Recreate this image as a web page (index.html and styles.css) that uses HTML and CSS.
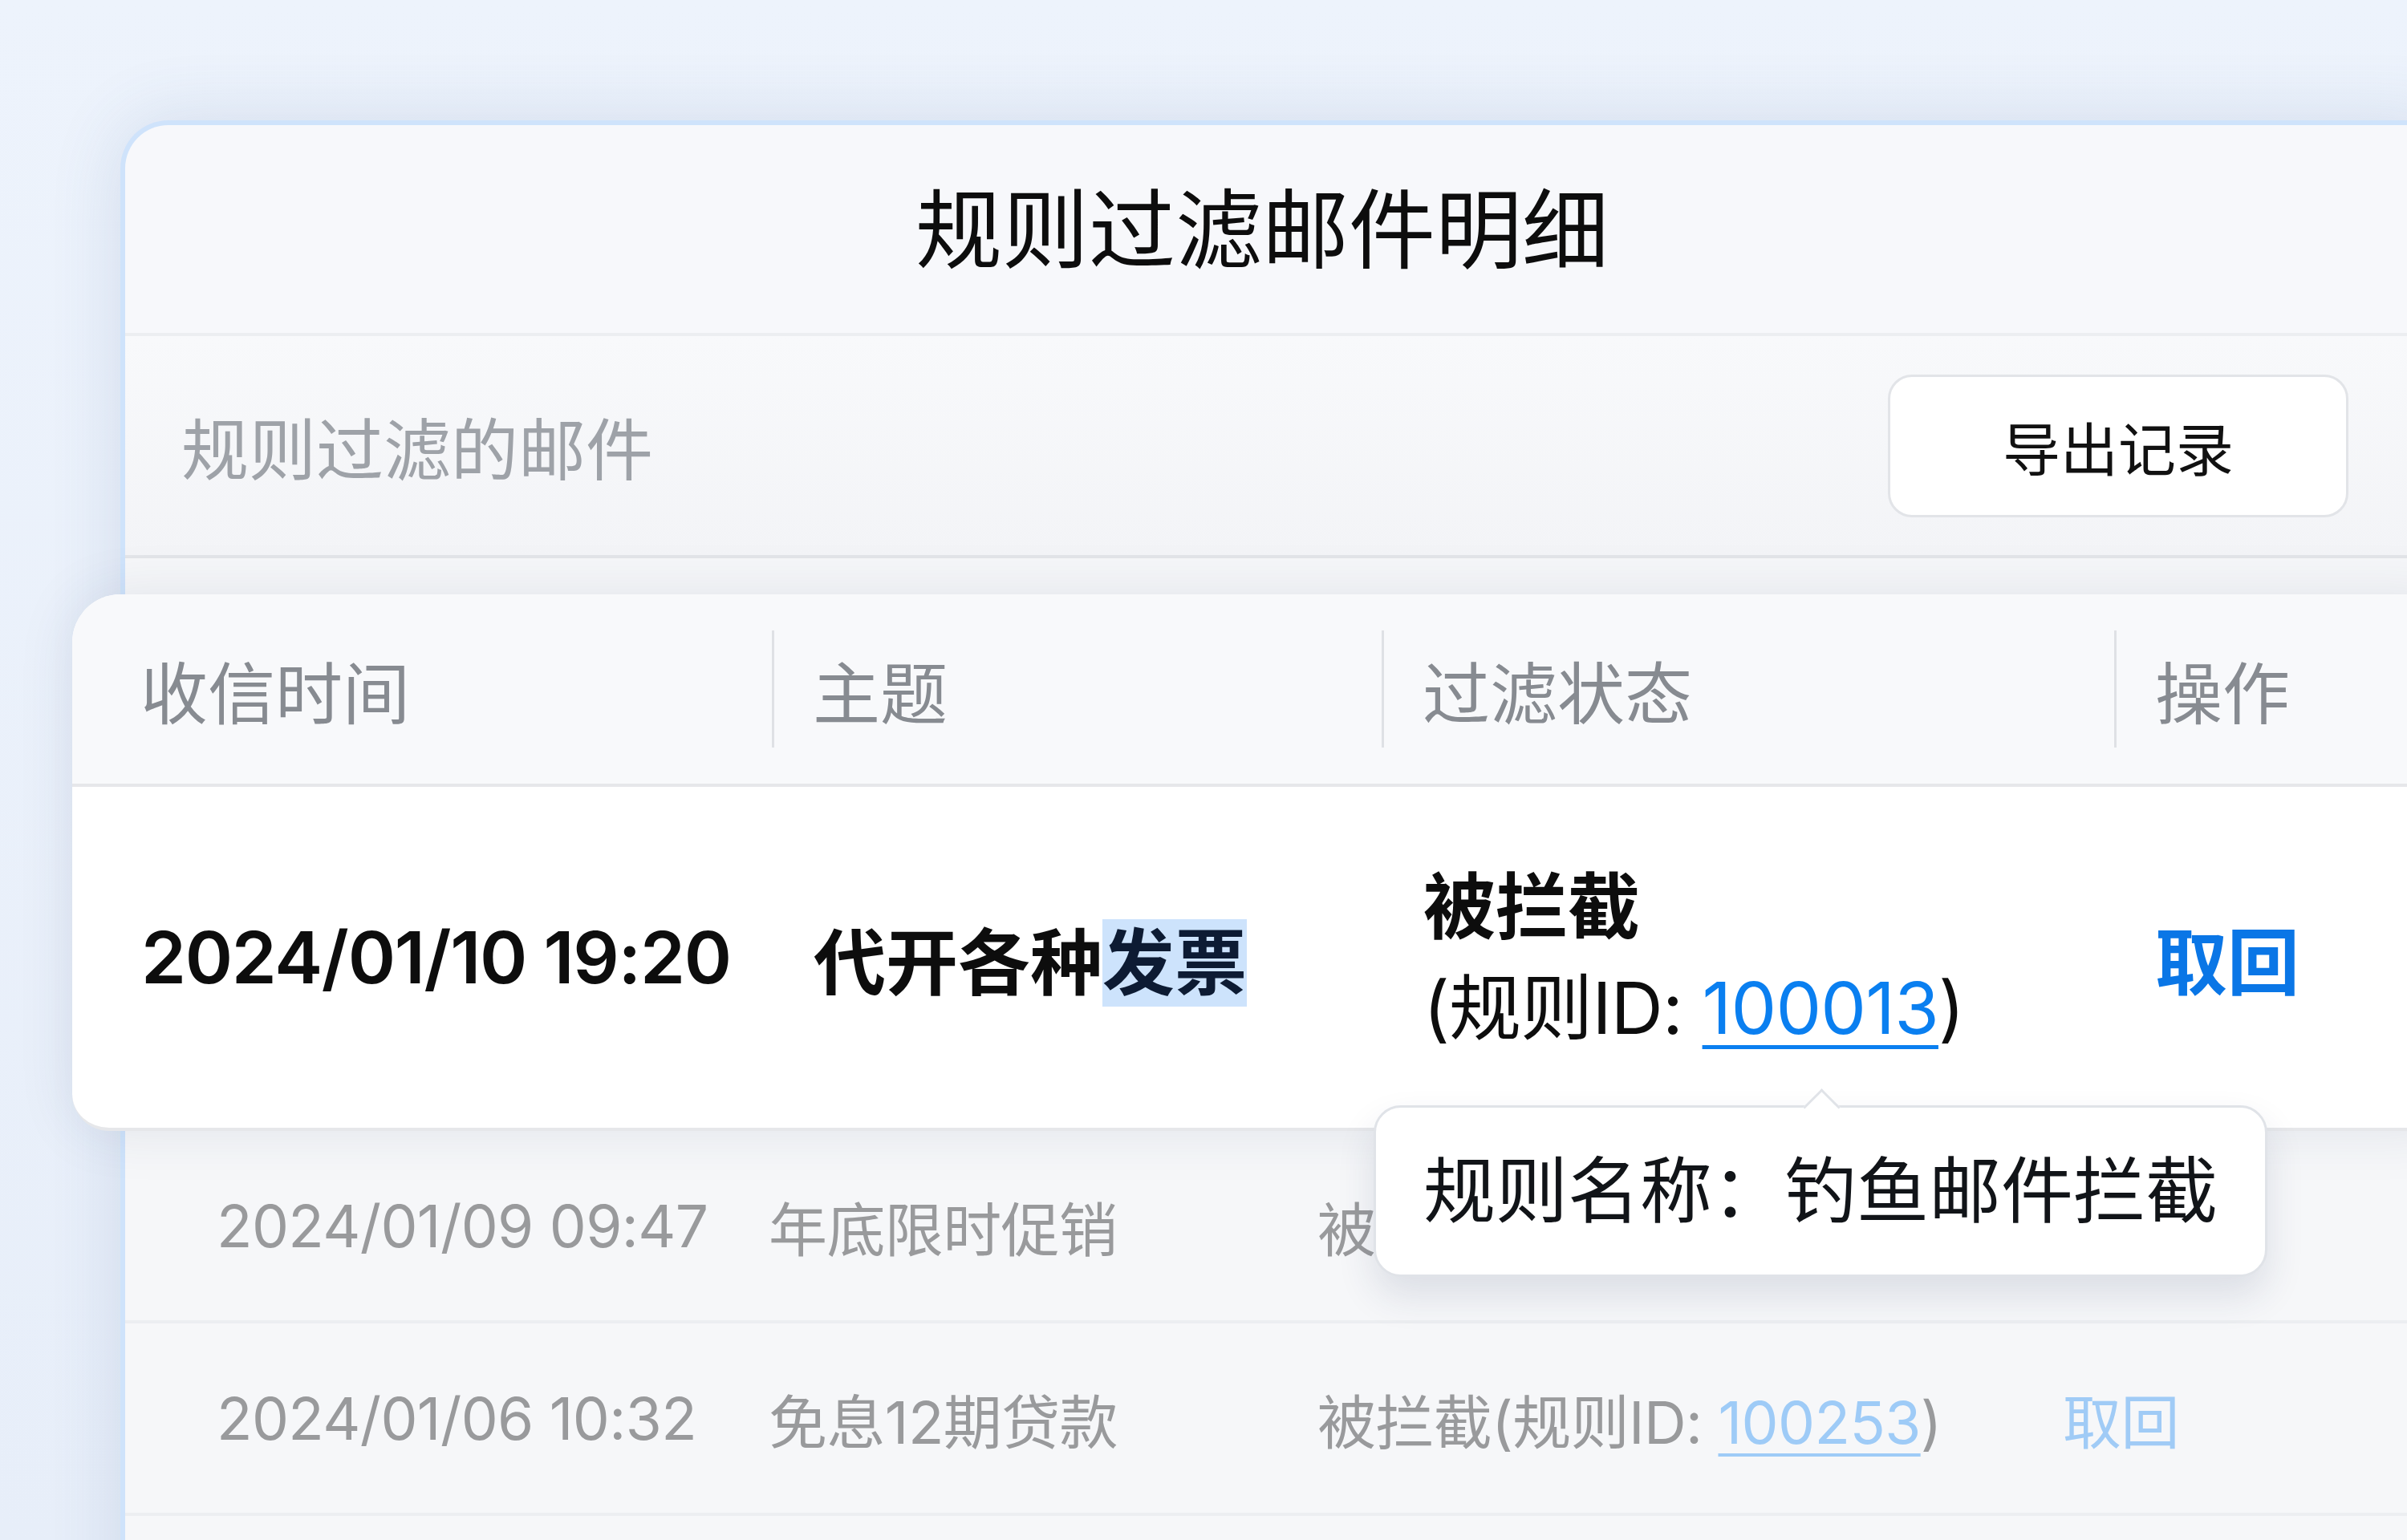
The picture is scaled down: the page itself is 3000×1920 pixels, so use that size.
FILE: index.html
```html
<!DOCTYPE html>
<html lang="zh-CN">
<head>
  <meta charset="UTF-8" />
  <meta name="viewport" content="width=device-width, initial-scale=1.0"/>
  <title>规则过滤邮件明细</title>
  <link rel="stylesheet" href="styles.css">
</head>
<body>
  <div class="panel">
    <div class="panel-title">规则过滤邮件明细</div>

    <div class="toolbar">
      <span class="toolbar-label">规则过滤的邮件</span>
      <button class="btn-export">导出记录</button>
    </div>

    <div class="list">
      <!-- 当前选中的记录，浮起显示 -->
      <div class="table-card">
        <div class="thead">
          <div class="th">收信时间</div>
          <div class="th">主题</div>
          <div class="th">过滤状态</div>
          <div class="th">操作</div>
        </div>
        <div class="trow">
          <div class="td td-time">2024/01/10 19:20</div>
          <div class="td td-subject">代开各种<span class="selected">发票</span></div>
          <div class="td td-status">
            <div class="status-title">被拦截</div>
            <div class="status-rule">(规则ID: <a class="rule-link">100013</a>)</div>
            <div class="tooltip">规则名称：钓鱼邮件拦截</div>
          </div>
          <div class="td td-action"><a class="action-link">取回</a></div>
        </div>
      </div>

      <div class="row">
        <div class="num">2024/01/09 09:47</div>
        <div>年底限时促销</div>
        <div>被拦截</div>
        <div></div>
      </div>
      <div class="row">
        <div class="num">2024/01/06 10:32</div>
        <div>免息12期贷款</div>
        <div>被拦截(规则ID: <a class="rule-link">100253</a>)</div>
        <div><a class="action-link">取回</a></div>
      </div>
    </div>
  </div>
</body>
</html>
```

FILE: styles.css
```css
body {
  margin: 0;
  width: 3000px;
  height: 1920px;
  overflow: hidden;
  background: linear-gradient(180deg, #edf3fc 0%, #e7eef9 100%);
  font-family: "Inter", "Noto Sans CJK SC", sans-serif;
  color: #0d0d0d;
}
.panel {
  margin: 150px 0 0 150px;
  width: 2900px;
  height: 1900px;
  box-sizing: border-box;
  background: #f7f8fb;
  border-top: 6px solid #cfe3fb;
  border-left: 6px solid #cfe3fb;
  border-radius: 60px 0 0 0;
  box-shadow: 0 0 90px rgba(60, 90, 140, 0.14);
}
.panel-title {
  height: 263px;
  box-sizing: border-box;
  display: flex;
  align-items: center;
  justify-content: center;
  padding: 0 60px 14px 0;
  font-size: 108px;
  border-bottom: 4px solid #eceef1;
}
.toolbar {
  height: 277px;
  box-sizing: border-box;
  display: flex;
  align-items: center;
  justify-content: space-between;
  padding: 0 123px 0 70px;
  background: linear-gradient(180deg, #f8f9fb 0%, #f3f4f7 100%);
  border-bottom: 4px solid #e3e5e9;
}
.toolbar-label {
  font-size: 84px;
  color: #9ea2a8;
}
.btn-export {
  width: 574px;
  height: 178px;
  font-family: inherit;
  font-size: 72px;
  color: #111;
  background: #fff;
  border: 3px solid #e2e4e8;
  border-radius: 30px;
}
.list {
  padding-top: 45px;
  background: #f6f7f9;
  height: 1300px;
}
.table-card {
  position: relative;
  z-index: 2;
  margin-left: -66px;
  width: 2960px;
  background: #fff;
  border-radius: 60px 0 0 46px;
  border-bottom: 4px solid #e6e7ea;
  box-shadow: 0 0 70px rgba(40, 60, 100, 0.10);
}
.thead, .trow {
  display: grid;
  grid-template-columns: 872px 760px 913px 1fr;
}
.thead {
  height: 240px;
  box-sizing: border-box;
  align-items: center;
  background: #f8f9fb;
  border-radius: 60px 0 0 0;
  border-bottom: 4px solid #e6e7ea;
  font-size: 84px;
  color: #878b91;
}
.th {
  padding-left: 85px;
}
.th + .th {
  height: 146px;
  display: flex;
  align-items: center;
  padding-left: 48px;
  border-left: 3px solid #dfe1e5;
}
.trow {
  height: 425px;
  font-size: 90px;
}
.td {
  display: flex;
  flex-direction: column;
  justify-content: center;
}
.td-time {
  padding-left: 86px;
  font-weight: 600;
  letter-spacing: -1.3px;
}
.td-subject {
  display: block;
  align-self: center;
  padding-left: 52px;
  font-weight: 600;
}
.selected {
  background: #cde3fc;
  color: #0d1b33;
}
.td-status {
  position: relative;
  padding-left: 52px;
  line-height: 126px;
}
.status-title {
  font-weight: 700;
}
.status-rule {
  letter-spacing: -0.8px;
}
.rule-link {
  color: #0a7ff0;
  text-decoration: underline;
  text-decoration-thickness: 5px;
  text-underline-offset: 14px;
}
.td-action {
  padding-left: 51px;
}
.action-link {
  color: #0a76e6;
  font-weight: 700;
}
.tooltip {
  position: absolute;
  left: -10px;
  top: 397px;
  height: 214px;
  box-sizing: border-box;
  display: flex;
  align-items: center;
  padding: 0 59px;
  white-space: nowrap;
  line-height: 1;
  letter-spacing: 0;
  color: #111418;
  background: #fff;
  border: 3px solid #e0e3e8;
  border-radius: 34px;
  box-shadow: 0 24px 48px rgba(30, 50, 90, 0.12);
}
.tooltip::before {
  content: "";
  position: absolute;
  top: -17px;
  left: calc(50% - 15px);
  width: 30px;
  height: 30px;
  background: #fff;
  border-top: 3px solid #e0e3e8;
  border-left: 3px solid #e0e3e8;
  transform: rotate(45deg);
}
.row {
  display: grid;
  grid-template-columns: 688px 684px 929px 1fr;
  align-items: center;
  height: 240px;
  box-sizing: border-box;
  padding-left: 114px;
  border-bottom: 4px solid #eceef1;
  font-size: 73px;
  color: #999a9c;
  letter-spacing: -0.6px;
}
.row .rule-link {
  color: #9ecbf7;
  text-decoration-thickness: 4px;
  text-underline-offset: 12px;
}
.row .action-link {
  color: #a0cbf6;
  font-weight: 400;
}
```
